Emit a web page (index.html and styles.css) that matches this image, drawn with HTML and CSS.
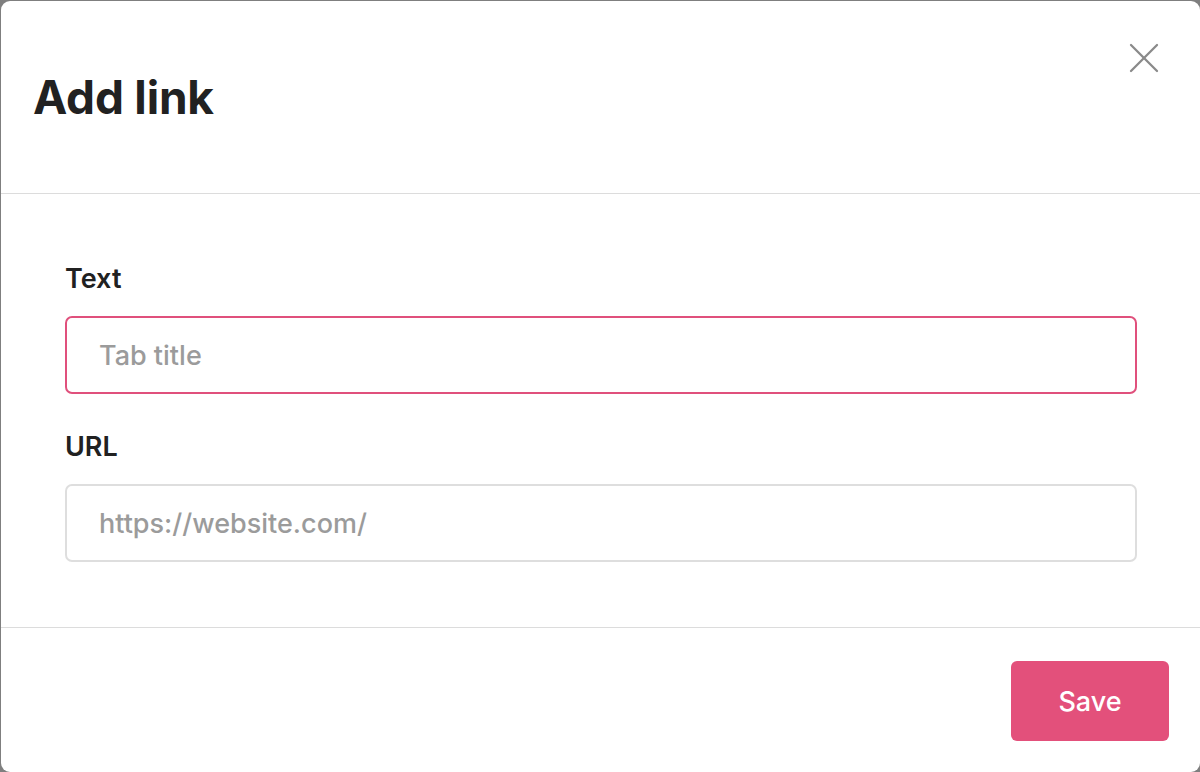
FILE: index.html
```html
<!DOCTYPE html>
<html lang="en">
<head>
<meta charset="utf-8">
<title>Add link</title>
<link rel="stylesheet" href="styles.css">
</head>
<body>
<div class="modal">
  <header class="modal-header">
    <h1 class="modal-title">Add link</h1>
    <button class="close-btn" aria-label="Close">
      <svg width="30" height="30" viewBox="0 0 30 30" fill="none" stroke="#8a8a8a" stroke-width="2.3" stroke-linecap="round">
        <line x1="2" y1="2" x2="28" y2="28"/>
        <line x1="28" y1="2" x2="2" y2="28"/>
      </svg>
    </button>
  </header>
  <main class="modal-body">
    <label class="field-label" for="text">Text</label>
    <input class="field-input focused" id="text" type="text" placeholder="Tab title">
    <label class="field-label url-label" for="url">URL</label>
    <input class="field-input" id="url" type="text" placeholder="https://website.com/">
  </main>
  <footer class="modal-footer">
    <button class="save-btn">Save</button>
  </footer>
</div>
</body>
</html>
```
FILE: styles.css
```css
* { box-sizing: border-box; }
html, body {
  margin: 0;
  padding: 0;
  height: 100%;
  overflow: hidden;
}
body {
  background: #7f7f7f;
  font-family: Inter, "Noto Sans", "Liberation Sans", sans-serif;
  padding: 1px 0 0 1px;
}
.modal {
  width: 1199px;
  height: 771px;
  background: #fff;
  border-radius: 9px;
  display: flex;
  flex-direction: column;
}
.modal-header {
  height: 193px;
  border-bottom: 1px solid #dcdcdc;
  display: flex;
  align-items: center;
  justify-content: space-between;
  padding: 0 41px 0 32px;
}
.modal-title {
  margin: 0;
  font-size: 46px;
  font-weight: 700;
  color: #212121;
  letter-spacing: -0.2px;
}
.close-btn {
  align-self: flex-start;
  margin-top: 42px;
  background: none;
  border: 0;
  padding: 0;
  width: 30px;
  height: 30px;
  cursor: pointer;
}
.close-btn svg { display: block; }
.modal-body {
  display: flex;
  flex-direction: column;
  padding: 68px 63px 65px 64px;
  border-bottom: 1px solid #dcdcdc;
}
.field-label {
  font-size: 27px;
  font-weight: 600;
  color: #212121;
  line-height: 34px;
  margin-bottom: 20px;
}
.url-label { margin-top: 36px; }
.field-input {
  height: 78px;
  width: 100%;
  border: 2px solid #dedede;
  border-radius: 7px;
  padding: 0 32px;
  font-family: inherit;
  font-size: 27px;
  font-weight: 500;
  color: #222;
  outline: none;
}
.field-input::placeholder { color: #9b9b9b; }
.field-input.focused { border-color: #e0507c; }
.modal-footer {
  flex: 1;
  display: flex;
  justify-content: flex-end;
  align-items: flex-start;
  padding: 33px 31px 0 0;
}
.save-btn {
  width: 158px;
  height: 80px;
  background: #e3507b;
  color: #fff;
  border: 0;
  border-radius: 6px;
  font-family: inherit;
  font-size: 27px;
  font-weight: 500;
  cursor: pointer;
}
```
